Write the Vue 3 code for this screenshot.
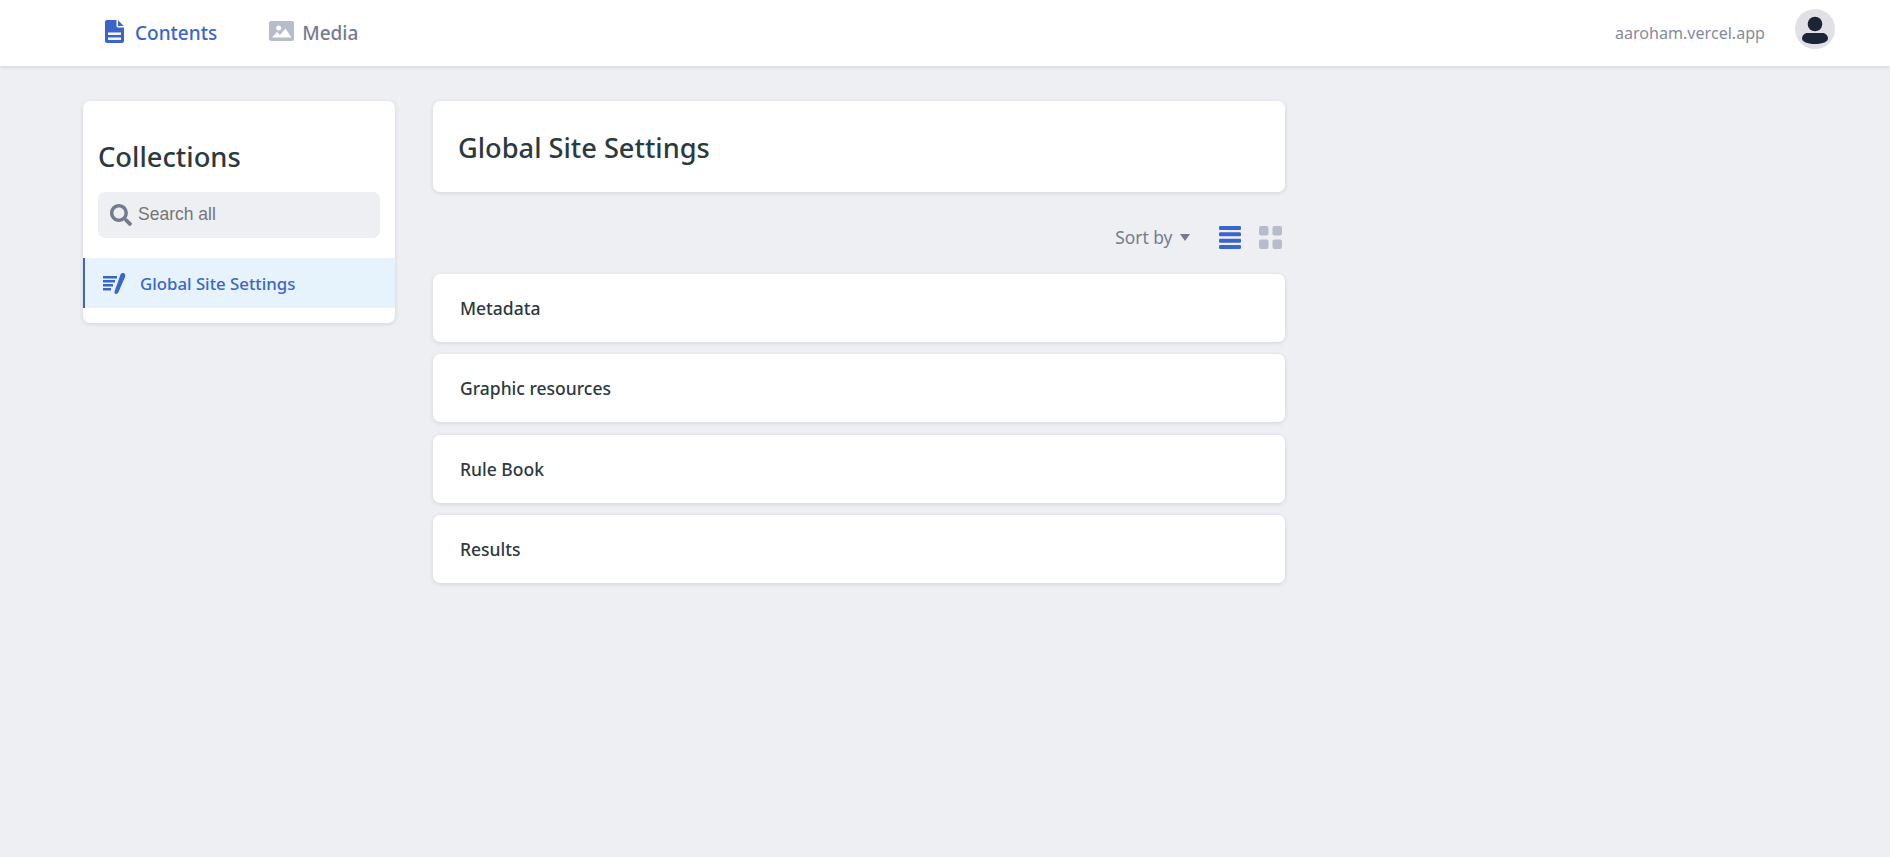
<script setup>
const rows = ['Metadata', 'Graphic resources', 'Rule Book', 'Results']
</script>

<template>
  <div class="page">
    <header class="nav">
      <div class="tabs">
        <a class="tab active">
          <svg class="tab-icon" viewBox="0 0 19 23" width="19" height="23">
            <path d="M2 0h9.500v6c0 .8.600 1.400 1.400 1.400H19V21c0 1.100-.9 2-2 2H2c-1.100 0-2-.9-2-2V2C0 .9.900 0 2 0z" fill="#3a66c9" />
            <path d="M13 0.300 18.700 6H13z" fill="#3a66c9" />
            <rect x="3" y="12.500" width="13" height="2.400" fill="#fff" />
            <rect x="3" y="17.500" width="13" height="2.400" fill="#fff" />
          </svg>
          <span>Contents</span>
        </a>
        <a class="tab">
          <svg class="tab-icon" viewBox="0 0 25 20" width="25" height="20">
            <rect width="25" height="20" rx="2" fill="#b6bcc9" />
            <circle cx="9.700" cy="7" r="2.500" fill="#fff" />
            <path d="M3 16.500l5-5.500 3 3 5.500-6.500 6 9z" fill="#fff" />
          </svg>
          <span>Media</span>
        </a>
      </div>
      <div class="account">
        <span class="site">aaroham.vercel.app</span>
        <svg class="avatar" viewBox="0 0 40 40" width="40" height="40">
          <circle cx="20" cy="20" r="20" fill="#e0e0e6" />
          <circle cx="20" cy="15" r="7.300" fill="#1c2536" />
          <path d="M7 29.500c0-3 2.500-5.500 5.500-5.500h15c3 0 5.500 2.500 5.500 5.500 0 3-5 5.500-13 5.500s-13-2.500-13-5.500z" fill="#1c2536" />
        </svg>
      </div>
    </header>

    <div class="layout">
      <aside class="card side">
        <h2 class="side-title">Collections</h2>
        <div class="search">
          <svg viewBox="0 0 512 512" width="22" height="22">
            <path fill="#747b8e" d="M505 442.700L405.300 343c-4.500-4.500-10.600-7-17-7H372c27.600-35.300 44-79.700 44-128C416 93.100 322.900 0 208 0S0 93.100 0 208s93.100 208 208 208c48.300 0 92.700-16.400 128-44v16.300c0 6.400 2.500 12.500 7 17l99.700 99.700c9.400 9.400 24.600 9.400 33.900 0l28.300-28.300c9.400-9.400 9.400-24.600.1-34zM208 336c-70.700 0-128-57.200-128-128 0-70.700 57.200-128 128-128 70.700 0 128 57.200 128 128 0 70.700-57.200 128-128 128z" />
          </svg>
          <span class="search-text">Search all</span>
        </div>
        <div class="side-item">
          <svg viewBox="0 0 23 23" width="23" height="23">
            <g fill="#3a66c9">
              <rect x="0" y="4" width="14" height="2.500" />
              <rect x="0" y="8" width="12" height="2.500" />
              <rect x="0" y="12" width="10" height="2.500" />
              <rect x="0" y="16" width="8" height="2.500" />
              <path d="M17.500 2.500c1-1.500 2.500-1.800 3.800-1 1.200.8 1.300 2.200.7 3.500l-6.500 15c-.7 1.500-2.200 2.400-3.300 1.800-1-.6-.9-2-.3-3.300z" />
            </g>
          </svg>
          <span>Global Site Settings</span>
        </div>
      </aside>

      <main class="main">
        <section class="card head">
          <h1>Global Site Settings</h1>
        </section>
        <div class="tools">
          <span class="sort">Sort by</span>
          <span class="caret"></span>
          <svg class="list" viewBox="0 0 22 23" width="22" height="23">
            <g fill="#3a66c9">
              <rect y="0" width="22" height="4" rx="1.200" />
              <rect y="6.300" width="22" height="4" rx="1.200" />
              <rect y="12.700" width="22" height="4" rx="1.200" />
              <rect y="19" width="22" height="4" rx="1.200" />
            </g>
          </svg>
          <svg class="grid" viewBox="0 0 23 23" width="23" height="23">
            <g fill="#b6bcc9">
              <rect width="9.500" height="9.500" rx="2" />
              <rect x="13.500" width="9.500" height="9.500" rx="2" />
              <rect y="13.500" width="9.500" height="9.500" rx="2" />
              <rect x="13.500" y="13.500" width="9.500" height="9.500" rx="2" />
            </g>
          </svg>
        </div>
        <div class="rows">
          <div v-for="r in rows" :key="r" class="card row">{{ r }}</div>
        </div>
      </main>
    </div>
  </div>
</template>

<style scoped>
.page {
  min-height: 857px;
  background: #eeeff3;
  font-family: "Noto Sans", "Open Sans", sans-serif;
  color: #2c3a40;
}
.nav {
  height: 66px;
  background: #fff;
  box-shadow: 0 1px 4px rgba(40, 50, 70, 0.14);
  display: flex;
  align-items: center;
  justify-content: space-between;
  padding: 0 55px 0 105px;
}
.tabs {
  display: flex;
  gap: 52px;
}
.tab {
  display: flex;
  align-items: center;
  gap: 11px;
  font-size: 19px;
  font-weight: 500;
  color: #747b8e;
}
.tab-icon {
  margin-bottom: 4px;
}
.tab + .tab {
  gap: 8px;
}
.tab.active {
  color: #3a66c9;
}
.account {
  display: flex;
  align-items: center;
  gap: 30px;
}
.site {
  font-size: 16.100px;
  color: #858b9c;
}
.avatar {
  display: block;
  margin-bottom: 8px;
}
.layout {
  display: flex;
  align-items: flex-start;
  gap: 38px;
  padding: 35px 0 0 83px;
}
.card {
  background: #fff;
  border-radius: 7px;
  box-shadow: 0 1px 4px rgba(40, 50, 70, 0.14);
}
.side {
  width: 312px;
  height: 222px;
  padding-top: 36px;
  box-sizing: border-box;
}
.side-title {
  margin: 0 15px 15px;
  font-size: 27.300px;
  line-height: 40px;
  font-weight: 500;
}
.search {
  margin: 0 15px;
  height: 46px;
  background: #eeeff3;
  border-radius: 7px;
  display: flex;
  align-items: center;
  gap: 6px;
  padding-left: 12px;
  font-family: "Liberation Sans", Arial, sans-serif;
  font-size: 17.500px;
  color: #757575;
}
.search-text {
  margin-bottom: 2px;
}
.side-item {
  margin-top: 20px;
  height: 50px;
  background: #e6f3fd;
  border-left: 2px solid #3a66c9;
  display: flex;
  align-items: center;
  gap: 14px;
  padding-left: 18px;
  font-size: 16.800px;
  font-weight: 500;
  color: #3a66c9;
}
.main {
  width: 852px;
}
.head {
  height: 91px;
  display: flex;
  align-items: center;
  padding-left: 25px;
}
.head h1 {
  margin: 0 0 -2px;
  font-size: 27.200px;
  font-weight: 500;
}
.tools {
  height: 74px;
  padding-top: 8px;
  display: flex;
  align-items: center;
  justify-content: flex-end;
  padding-right: 3.500px;
  color: #747b8e;
}
.sort {
  font-size: 17.400px;
  margin-right: 7px;
}
.caret {
  width: 0;
  height: 0;
  border-left: 5.500px solid transparent;
  border-right: 5.500px solid transparent;
  border-top: 7px solid #747b8e;
  margin-right: 29px;
}
.list {
  margin-right: 18px;
}
.rows {
  display: flex;
  flex-direction: column;
  gap: 12.400px;
}
.row {
  height: 68px;
  display: flex;
  align-items: center;
  padding-left: 27px;
  font-size: 17.500px;
  font-weight: 500;
}
</style>

<style>
html, body {
  background: #eeeff3;
}
</style>
